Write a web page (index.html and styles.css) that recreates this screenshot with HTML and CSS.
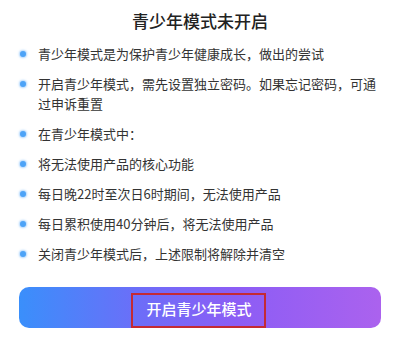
FILE: index.html
```html
<!DOCTYPE html>
<html lang="zh-CN">
<head>
<meta charset="utf-8">
<link rel="stylesheet" href="styles.css">
</head>
<body>
<div class="page">
  <h1 class="title">青少年模式未开启</h1>
  <ul class="list">
    <li class="item"><span class="dot"></span><span class="text">青少年模式是为保护青少年健康成长，做出的尝试</span></li>
    <li class="item"><span class="dot"></span><span class="text">开启青少年模式，需先设置独立密码。如果忘记密码，可通过申诉重置</span></li>
    <li class="item"><span class="dot"></span><span class="text">在青少年模式中：</span></li>
    <li class="item"><span class="dot"></span><span class="text">将无法使用产品的核心功能</span></li>
    <li class="item"><span class="dot"></span><span class="text">每日晚22时至次日6时期间，无法使用产品</span></li>
    <li class="item"><span class="dot"></span><span class="text">每日累积使用40分钟后，将无法使用产品</span></li>
    <li class="item"><span class="dot"></span><span class="text">关闭青少年模式后，上述限制将解除并清空</span></li>
  </ul>
  <div class="btn">
    <span class="btn-label">开启青少年模式</span>
    <span class="highlight"></span>
  </div>
</div>
</body>
</html>
```
FILE: styles.css
```css
html, body {
  margin: 0;
  padding: 0;
  background: #ffffff;
}
body {
  font-family: "Noto Sans CJK SC", "Noto Sans", sans-serif;
  color: #333333;
  width: 400px;
  height: 337px;
  overflow: hidden;
}
.page {
  display: flex;
  flex-direction: column;
  padding: 0 19px;
}
.title {
  margin: 0;
  padding-top: 9px;
  height: 24px;
  line-height: 24px;
  font-size: 17px;
  font-weight: 500;
  color: #222222;
  text-align: center;
}
.list {
  list-style: none;
  margin: 11px 0 0 0;
  padding: 0 0 0 1px;
  display: flex;
  flex-direction: column;
  gap: 10px;
}
.item {
  display: flex;
  align-items: flex-start;
  gap: 12px;
  font-size: 13px;
  line-height: 20px;
}
.dot {
  flex: none;
  width: 6px;
  height: 6px;
  margin-top: 7px;
  border-radius: 50%;
  background: #4da3f7;
  box-shadow: 0 0 2px 1px rgba(120, 185, 250, 0.6);
}
.text {
  flex: 1;
}
.btn {
  position: relative;
  margin-top: 23px;
  height: 41px;
  border-radius: 10px;
  background: linear-gradient(90deg, #3a8ffb 0%, #6f6cf8 35%, #8c5df5 60%, #ab62ee 100%);
  display: flex;
  align-items: center;
  justify-content: center;
}
.btn-label {
  color: #ffffff;
  font-size: 15px;
  font-weight: 500;
  line-height: 20px;
  margin-top: 3px;
  margin-left: -2px;
}
.highlight {
  position: absolute;
  left: 112px;
  top: 6px;
  width: 131px;
  height: 31px;
  border: 2px solid #c42a34;
}
```
